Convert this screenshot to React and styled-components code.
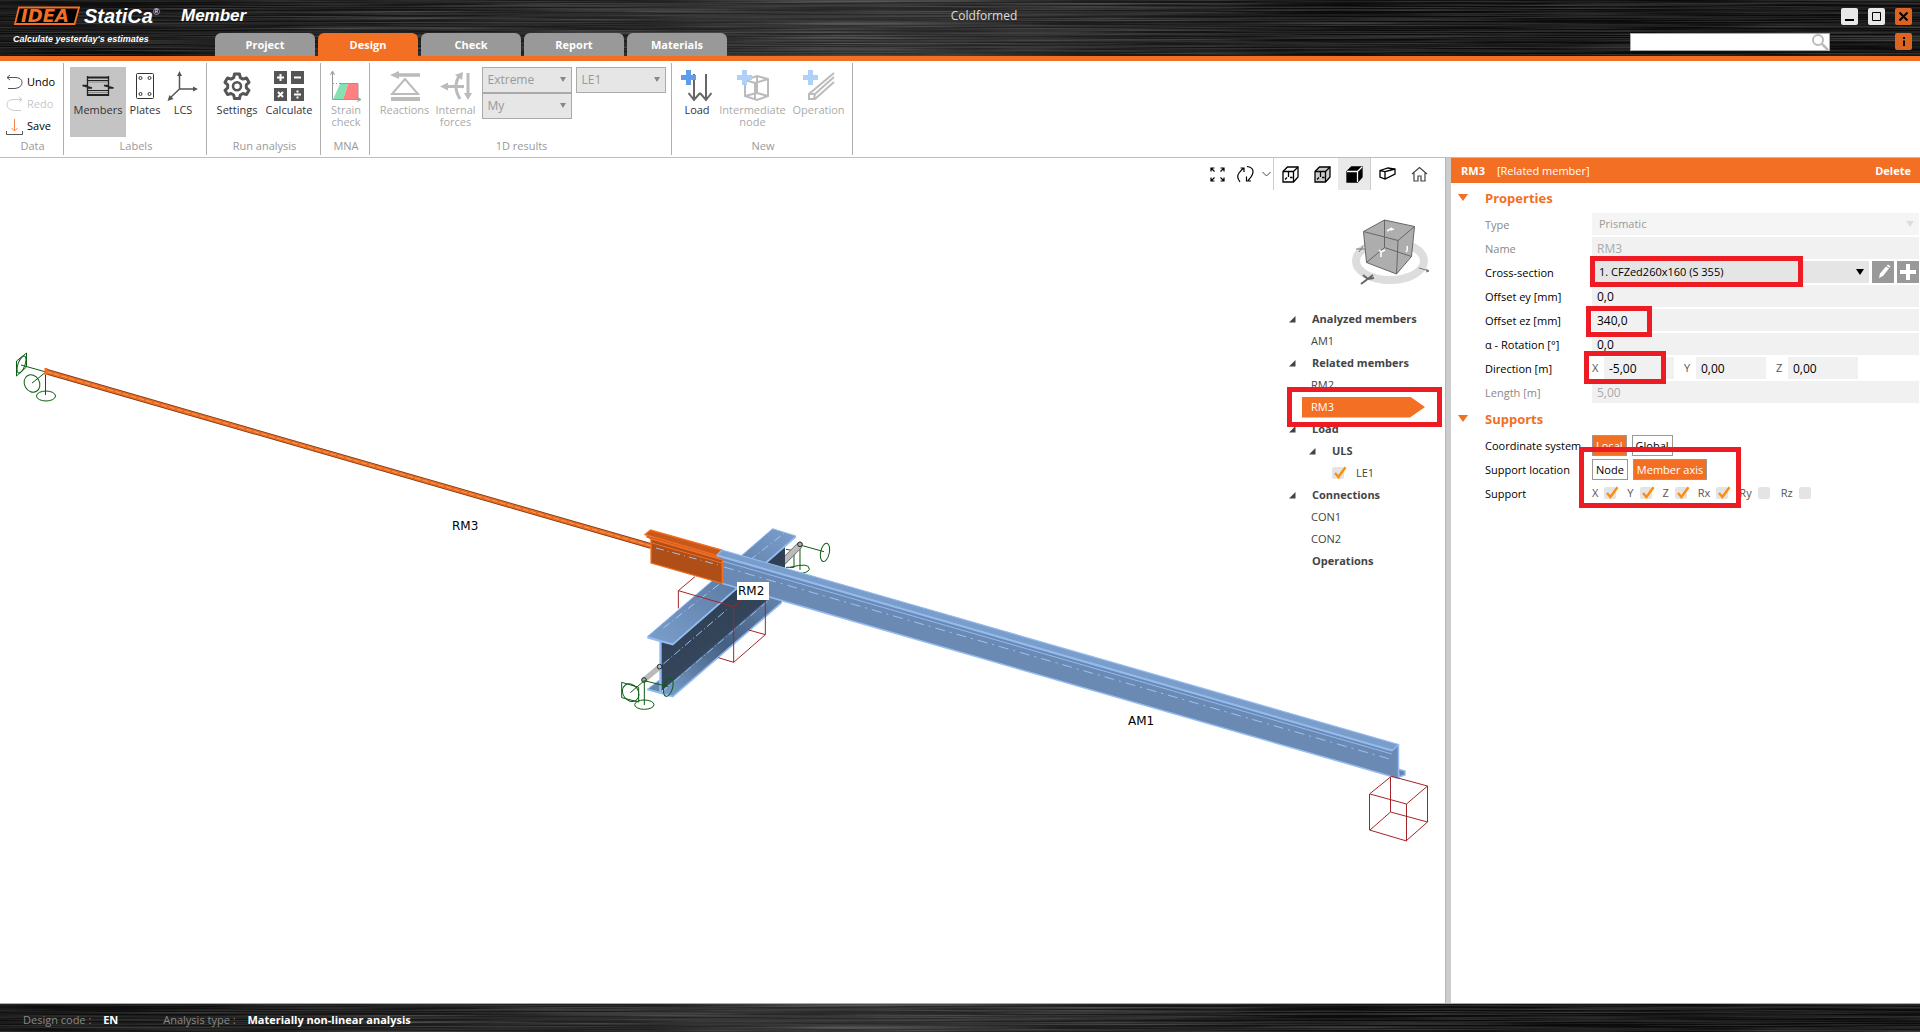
import React, { useState } from 'react';
import styled, { createGlobalStyle, css } from 'styled-components';

const ORANGE = '#f36f24';

const GlobalStyle = createGlobalStyle`
  * { box-sizing: border-box; }
  body {
    margin: 0;
    background: #fff;
    color: #000;
    font: 11px/16px "Open Sans", "Noto Sans", sans-serif;
  }
  button, input, select { font: inherit; color: inherit; }
  button { padding: 0; border: 0; background: none; cursor: pointer; }
`;

const Page = styled.div`
  display: flex;
  flex-direction: column;
  min-height: 100vh;
`;

// ---------- header ----------

const Header = styled.header`
  position: relative;
  display: flex;
  height: 61px;
  background: #0b0b0b;
  border-bottom: 5px solid ${ORANGE};
`;

const TextureSvg = styled.svg`
  position: absolute;
  inset: 0;
  width: 100%;
  height: 100%;
`;

const Brand = styled.div`
  position: relative;
  width: 215px;
  padding: 4px 0 0 13px;
`;

const BrandRow = styled.div`
  display: flex;
  align-items: center;
  height: 24px;
  color: #fff;
  font: italic bold 17px/24px "Liberation Sans", sans-serif;
  svg { flex: none; }
`;

const BrandName = styled.span`
  flex: none;
  width: 100px;
  padding-left: 3px;
  font-size: 20px;
  sup { font-size: 9px; line-height: 0; font-weight: normal; vertical-align: 8px; }
`;

const Slogan = styled.div`
  color: #fff;
  font: italic bold 9px/22px "Liberation Sans", sans-serif;
`;

const Tabs = styled.nav`
  position: relative;
  display: flex;
  align-items: flex-end;
  gap: 3px;
`;

const Tab = styled.button`
  width: 100px;
  height: 23px;
  border-radius: 6px 6px 0 0;
  color: #fff;
  font-weight: bold;
  background: ${props => (props.$active ? ORANGE : '#999')};
`;

const DocTitle = styled.div`
  position: absolute;
  top: 8px;
  left: 0;
  right: 0;
  padding-left: 48px;
  text-align: center;
  color: #ddd;
  font-size: 12px;
`;

const HeaderRight = styled.div`
  position: relative;
  display: flex;
  margin-left: auto;
  padding: 8px 8px 0 0;
  gap: 11px;
`;

const Search = styled.label`
  position: relative;
  width: 200px;
  height: 18px;
  margin-top: 25px;
  input {
    display: block;
    width: 100%;
    height: 100%;
    border: 1px solid #aaa;
    background: #fff;
    padding: 0 22px 0 4px;
  }
  svg { position: absolute; right: 1px; top: 0; }
`;

const WindowButtons = styled.div`
  display: grid;
  grid-template-columns: repeat(3, 17px);
  grid-auto-rows: 17px;
  gap: 8px 10px;
`;

const WindowButton = styled.button`
  display: flex;
  border-radius: 2px;
  background: ${props => (props.$accent ? '#dd6420' : '#e8e8e8')};
  ${props => props.$last && css`grid-column: 3;`}
`;

// ---------- ribbon ----------

const Ribbon = styled.div`
  display: flex;
  height: 97px;
  padding-top: 2px;
  border-bottom: 1px solid #bdbdbd;
`;

const Group = styled.section`
  display: flex;
  flex-direction: column;
  width: ${props => props.$width}px;
  height: 92px;
  padding-top: 4px;
  border-right: 1px solid #b0b0b0;
`;

const GroupBody = styled.div`
  display: flex;
  justify-content: ${props => props.$align || 'center'};
  height: 70px;
  padding-left: ${props => props.$pad || 0}px;
`;

const GroupTitle = styled.div`
  padding-left: 2px;
  color: #999;
  text-align: center;
  line-height: 18px;
`;

const Tool = styled.button`
  display: flex;
  flex-direction: column;
  align-items: center;
  width: ${props => props.$width}px;
  height: 70px;
  padding-top: 3px;
  line-height: 12px;
  color: ${props => (props.disabled ? '#aaa' : '#333')};
  background: ${props => (props.$active ? '#c4c4c4' : 'none')};
  svg { display: block; width: 32px; height: 32px; margin-bottom: 2px; flex: none; }
  span { white-space: nowrap; }
`;

const DataList = styled.div`
  display: flex;
  flex-direction: column;
  width: 63px;
  padding: 4px 0 0 6px;
`;

const DataButton = styled.button`
  display: flex;
  align-items: center;
  gap: 4px;
  height: 22px;
  color: ${props => (props.disabled ? '#c8c8c8' : '#000')};
`;

const Combos = styled.div`
  display: grid;
  grid-template-columns: 90px 90px;
  grid-auto-rows: 26px;
  gap: 0 4px;
  margin-left: 4px;
`;

const ComboWrap = styled.div`
  position: relative;
  height: 26px;
  border: 1px solid #aaa;
  background: #e6e6e6;
  color: #999;
  select {
    display: block;
    width: 100%;
    height: 100%;
    padding: 0 20px 0 5px;
    border: 0;
    background: none;
    appearance: none;
    opacity: 1;
    font-size: 12px;
  }
  &::after {
    content: '';
    position: absolute;
    right: 5px;
    top: 9px;
    border: 3px solid transparent;
    border-top: 5px solid #888;
    pointer-events: none;
  }
`;

// ---------- workspace ----------

const Main = styled.main`
  display: flex;
  flex: 1;
`;

const Viewport = styled.section`
  position: relative;
  flex: 1;
  min-width: 0;
`;

const Scene = styled.svg`
  position: absolute;
  inset: 0;
  width: 100%;
  height: 100%;
`;

const ViewTools = styled.div`
  position: relative;
  display: flex;
  justify-content: flex-end;
  padding-right: 10px;
`;

const ViewTool = styled.button`
  display: flex;
  align-items: center;
  justify-content: center;
  width: ${props => props.$width || 32}px;
  height: 32px;
  border-right: ${props => (props.$divider ? '1px solid #ccc' : '0')};
  background: ${props => (props.$active ? '#e9e9e9' : 'none')};
`;

const SidePane = styled.div`
  position: relative;
  width: 158px;
  margin-left: auto;
`;

const NavCube = styled.svg`
  display: block;
  margin: 20px 0 23px 60px;
`;

const Tree = styled.ul`
  margin: 0;
  padding: 0;
  list-style: none;
`;

const TreeItem = styled.li`
  position: relative;
  display: flex;
  align-items: center;
  height: 22px;
  color: #444;
  padding-left: ${props => (props.$level ? 20 : 0)}px;
`;

const Arrow = styled.span`
  width: 25px;
  padding-left: 2px;
  svg { display: block; }
`;

const TreeButton = styled.button`
  height: 21px;
  text-align: left;
  font-weight: ${props => (props.$bold ? 'bold' : 'normal')};
  ${props => !props.$bold && css`margin-left: 15px; padding-left: 9px;`}
  ${props => props.$active && css`
    width: 123px;
    color: #fff;
    background: ${ORANGE};
    clip-path: polygon(0 0, 108px 0, 100% 50%, 108px 100%, 0 100%);
  `}
`;

const TreeCheck = styled.label`
  display: flex;
  align-items: center;
  gap: 12px;
  padding-left: 25px;
`;

const Highlight = styled.span`
  position: absolute;
  z-index: 1;
  top: ${props => props.$top}px;
  left: ${props => props.$left}px;
  width: ${props => props.$width}px;
  height: ${props => props.$height}px;
  border: 5px solid #ed1c24;
  pointer-events: none;
`;

// ---------- property panel ----------

const Splitter = styled.div`
  width: 6px;
  background: #ccc;
  border-left: 1px solid #b4b4b4;
`;

const Panel = styled.aside`
  width: 469px;
`;

const PanelHeader = styled.div`
  display: flex;
  align-items: center;
  gap: 12px;
  height: 25px;
  padding: 0 9px 0 10px;
  color: #fff;
  background: ${ORANGE};
  button { margin-left: auto; font-weight: bold; }
`;

const SectionTitle = styled.h2`
  display: flex;
  align-items: center;
  gap: 17px;
  height: 30px;
  margin: 0;
  padding-left: 7px;
  color: ${ORANGE};
  font-size: 13px;
`;

const Rows = styled.div`
  display: flex;
  flex-direction: column;
  gap: 2px;
  padding: 0 1px 1px 34px;
`;

const Row = styled.div`
  position: relative;
  display: grid;
  grid-template-columns: 107px 1fr;
  align-items: center;
  height: 22px;
  color: ${props => (props.$muted ? '#888' : '#000')};
  white-space: nowrap;
`;

const rowLabel = css`
  padding-top: 2px;
`;

const RowLabel = styled.label`${rowLabel}`;

const RowCaption = styled.span`${rowLabel}`;

const Field = styled.input`
  width: 100%;
  min-width: 0;
  height: 22px;
  padding: 0 5px;
  border: 0;
  background: #f1f1f1;
  font-size: 12px;
  &:disabled { color: #aaa; }
`;

const SelectField = styled.div`
  position: relative;
  flex: 1;
  height: 22px;
  background: ${props => (props.$muted ? '#f5f5f5' : '#e5e5e5')};
  select {
    width: 100%;
    height: 22px;
    padding: 0 20px 0 7px;
    border: 0;
    background: none;
    appearance: none;
    opacity: 1;
    color: ${props => (props.$muted ? '#999' : '#000')};
  }
  &::after {
    content: '';
    position: absolute;
    right: 5px;
    top: 8px;
    border: 4px solid transparent;
    border-top: 6px solid ${props => (props.$muted ? '#ddd' : '#000')};
    pointer-events: none;
  }
`;

const Inline = styled.div`
  display: flex;
  align-items: center;
  gap: ${props => props.$gap}px;
`;

const SquareButton = styled.button`
  width: 22px;
  height: 22px;
  background: #999;
  svg { display: block; }
`;

const Axis = styled.label`
  display: grid;
  grid-template-columns: 12px 70px;
  align-items: center;
  color: #555;
  input { color: #000; }
`;

const Toggle = styled.button`
  height: 21px;
  padding: 0 3px;
  border: 1px solid #999;
  line-height: 19px;
  color: ${props => (props.$active ? '#fff' : '#000')};
  background: ${props => (props.$active ? ORANGE : '#fff')};
`;

const CheckLabel = styled.label`
  display: flex;
  align-items: center;
  gap: 6px;
  color: #555;
`;

const CheckBox = styled.span`
  position: relative;
  width: 12px;
  height: 12px;
  input {
    display: block;
    width: 12px;
    height: 12px;
    margin: 0;
    appearance: none;
    border-radius: 2px;
    background: #e4e4e4;
  }
  svg { position: absolute; left: 1px; bottom: 0; pointer-events: none; }
`;

// ---------- footer ----------

const Footer = styled.footer`
  position: relative;
  display: flex;
  height: 29px;
  padding: 3px 23px 0;
  gap: 45px;
  align-items: center;
  border-top: 1px solid #aaa;
  background: #0b0b0b;
  color: #888;
  div { position: relative; }
  b { margin-left: 9px; color: #fff; }
`;

const Brushed = ({ id }) => (
  <TextureSvg aria-hidden="true" preserveAspectRatio="none">
    <filter id={id} x="0" y="0" width="100%" height="100%">
      <feTurbulence type="fractalNoise" baseFrequency="0.004 0.8" numOctaves="3" seed="4" />
      <feColorMatrix values="0 0 0 0 1  0 0 0 0 1  0 0 0 0 1  0.45 0 0 0 -0.16" />
    </filter>
    <linearGradient id={`${id}g`}>
      <stop offset="0" stopColor="#fff" stopOpacity="0" />
      <stop offset=".2" stopColor="#fff" stopOpacity=".04" />
      <stop offset=".46" stopColor="#fff" stopOpacity=".13" />
      <stop offset=".7" stopColor="#fff" stopOpacity="0" />
    </linearGradient>
    <rect width="100%" height="100%" fill={`url(#${id}g)`} />
    <rect width="100%" height="100%" filter={`url(#${id})`} />
  </TextureSvg>
);

const Tick = () => (
  <svg width="14" height="13" viewBox="0 0 14 13">
    <path d="M2 7l3.400 4L12.500 1.200" fill="none" stroke="#ff8c0a" strokeWidth="2.400" />
  </svg>
);

const Check = ({ label, checked }) => {
  const [on, setOn] = useState(Boolean(checked));
  return (
    <CheckBox>
      <input type="checkbox" aria-label={label} checked={on} onChange={e => setOn(e.target.checked)} />
      {on && <Tick />}
    </CheckBox>
  );
};

// ribbon drawings, all on a 32 x 32 grid
const toolIcons = {
  members: (
    <g fill="none" stroke="#222">
      <path d="M5 7.500h22M5 25h22" strokeWidth="2" />
      <path d="M5 10.500h22M5 20.500h22" />
      <path d="M5 12h22M5 22.500h22" stroke="#888" />
      <path d="M5.500 6v9.500H.5l9.500 2.500H5.500v8M26.500 6v9.500H22l9.500 2.500h-5v8" strokeWidth="1.300" />
    </g>
  ),
  plates: (
    <g fill="none" stroke="#333">
      <rect x="7.500" y="3.500" width="17" height="25" rx="1" />
      <circle cx="11.500" cy="8" r="1.500" /><circle cx="20.500" cy="8" r="1.500" />
      <circle cx="11.500" cy="24" r="1.500" /><circle cx="20.500" cy="24" r="1.500" />
    </g>
  ),
  lcs: (
    <g fill="#555" stroke="#555">
      <path d="M12.500 4v15H28M12.500 19L3 28" fill="none" strokeWidth="1.500" />
      <path d="M12.500 1l2.500 5h-5zM31 19l-5-2.500v5zM0.500 31l2-6 4 4z" stroke="none" />
    </g>
  ),
  settings: (
    <g fill="none" stroke="#555" strokeWidth="3">
      <path strokeLinejoin="round" d="M13.500 4h5l.8 3.600 2.700 1.500 3.500-1.100 2.500 4.300-2.700 2.500v3l2.700 2.500-2.500 4.300-3.500-1.100-2.700 1.500-.8 3.600h-5l-.8-3.600L10 23.500l-3.500 1.100L4 20.300l2.700-2.500v-3L4 12.300 6.500 8 10 9.100l2.700-1.500z" />
      <circle cx="16" cy="16.300" r="4" strokeWidth="2.600" />
    </g>
  ),
  calculate: (
    <g>
      <path d="M1 1h13v13H1zM18 1h13v13H18zM1 18h13v13H1zM18 18h13v13H18z" fill="#555" />
      <path d="M4 7.500h7M7.500 4v7M21 7.500h7M5 22l5 5M10 22l-5 5M21 24.500h7" stroke="#fff" strokeWidth="2" />
      <path d="M23.500 20.500h2v2h-2zM23.500 26.500h2v2h-2z" fill="#fff" />
    </g>
  ),
  strain: (
    <g fill="none" stroke="#999">
      <path d="M18 14h10v15.500H13z" fill="#ff8080" stroke="none" />
      <path d="M10 14h8l-5 15.500H3z" fill="#85e0b2" stroke="none" />
      <path d="M2.500 29.500V2M.5 5l2-4 2 4M2.500 29.500H30M27 27.500l4 2-4 2" />
      <path d="M3 13.500h7" strokeDasharray="1 2" /><path d="M10 13.500h18v16" />
    </g>
  ),
  reactions: (
    <g fill="none" stroke="#bbb">
      <path d="M9 5h22" strokeWidth="3.500" /><path d="M1 5l9-4v8z" fill="#bbb" stroke="none" />
      <path d="M16 9L3 24h26z" strokeWidth="2" /><path d="M2 29h29" strokeWidth="4" />
    </g>
  ),
  internal: (
    <g fill="none" stroke="#bbb" strokeWidth="3">
      <path d="M5 16.500h19M28 3v22M20 5q-8 11 0 24" />
      <path d="M0 16.500l8-4v8zM15 5l8-3-1 8zM24 23h8l-4 7z" fill="#bbb" stroke="none" />
    </g>
  ),
  load: (
    <g fill="none" stroke="#666" strokeWidth="2">
      <path d="M13 4v26M25 4v26M7.500 23l5.500 7 6-7M19 23l6 7 5.500-7" />
      <path d="M5 0h5v5h5v5h-5v5H5v-5H0V5h5z" fill="#5f9dea" stroke="none" />
    </g>
  ),
  node: (
    <g fill="none" stroke="#bbb" strokeWidth="2">
      <path d="M8 10l12-4 11 3v17l-11 4-12-4zM8 10l10 3 13-4M18 13v17M20 6v17L8 26M20 23l11 3" />
      <path d="M5 0h5v5h5v5h-5v5H5v-5H0V5h5z" fill="#b0d0f7" stroke="none" />
    </g>
  ),
  operation: (
    <g fill="none" stroke="#bbb" strokeWidth="2">
      <path d="M31 3L6 24v5h6L31 12M12 24L31 7M6 24h6l-1 5" />
      <path d="M5 0h5v5h5v5h-5v5H5v-5H0V5h5z" fill="#b0d0f7" stroke="none" />
    </g>
  ),
};

const RibbonTool = ({ icon, lines, ...props }) => (
  <Tool {...props}>
    <svg viewBox="0 0 32 32">{toolIcons[icon]}</svg>
    {lines.map(line => <span key={line}>{line}</span>)}
  </Tool>
);

const Combo = ({ label, value }) => (
  <ComboWrap>
    <select aria-label={label} disabled defaultValue={value}>
      <option>{value}</option>
    </select>
  </ComboWrap>
);

const CubeIcon = ({ fill, solid }) => (
  <svg width="17" height="17" viewBox="0 0 17 17" fill={fill || 'none'} stroke="#000" strokeWidth="1.300">
    <path d="M1 5.500L5.500 1H16v10l-4.500 5H1z" />
    {solid
      ? <path d="M1 5.500h10.500V16M11.500 5.500L16 1" stroke="#fff" />
      : <path d="M1 5.500h10.500V16M11.500 5.500L16 1M6.500 5v6M8 11.500h2.500M5 11.500L3 13.500" />}
  </svg>
);

const steel = '#93bbf2';

const SupportSymbol = () => (
  <g fill="none" stroke="#0b5d12" strokeWidth="1">
    <path d="M45.500 372v23M46 372L32 383M46 372l-25-7" />
    <path d="M16.500 361l10-8v14l-10 9z" />
    <ellipse cx="21.500" cy="364.500" rx="3.500" ry="9" transform="rotate(20 21.500 364.500)" />
    <ellipse cx="32" cy="383.500" rx="7.500" ry="9" transform="rotate(-30 32 383.500)" />
    <ellipse cx="46" cy="396" rx="9.500" ry="5" />
  </g>
);

const ModelScene = () => (
  <Scene viewBox="0 158 1445 845" fontFamily="DejaVu Sans, sans-serif" fontSize="12">
    <defs>
      <linearGradient id="web" x1="0" y1="0" x2=".6" y2="1">
        <stop offset="0" stopColor="#253244" /><stop offset="1" stopColor="#3c4f66" />
      </linearGradient>
      <linearGradient id="flange" x1="0" y1="1" x2="1" y2="0">
        <stop offset="0" stopColor="#7b9fcd" /><stop offset=".55" stopColor="#5d7da5" /><stop offset="1" stopColor="#7b9fcd" />
      </linearGradient>
      <linearGradient id="lowerFlange" x1="0" y1="1" x2="1" y2="0">
        <stop offset="0" stopColor="#7b9fcd" /><stop offset=".5" stopColor="#455f80" /><stop offset="1" stopColor="#6888b2" />
      </linearGradient>
    </defs>

    <SupportSymbol />

    {/* cross beam RM2 */}
    <g transform="translate(600 500) scale(.33333)" strokeWidth="3">
      <g fill="none" stroke="#0b5d12">
        <path d="M600 135v75M600 135l72 20M558 148l24 4v50h-24M570 202q60-16 58 6q-6 12-30 12" />
        <ellipse cx="675" cy="157" rx="13" ry="28" transform="rotate(12 675 157)" />
      </g>
      <path d="M545 190l55-55" stroke="#777" strokeWidth="20" />
      <path d="M545 190l55-55" stroke="#bbb" strokeWidth="15" />
      <circle cx="600" cy="133" r="7" fill="#aaa" stroke="#222" />
      <path d="M142 568l36-28 8 38z" fill="#6686ae" stroke={steel} />
      <path d="M184 578l34 12L545 308l-5-50-110 60z" fill="url(#lowerFlange)" />
      <path d="M184 424l34 10L555 140v70L512 290 184 574z" fill="url(#web)" />
      <path d="M142 568l76 22L545 308" fill="none" stroke={steel} strokeWidth="5" />
      <path d="M190 572L512 296M190 492L384 326" fill="none" stroke={steel} strokeDasharray="24 8 3 8" />
      <path d="M142 410L518 86l70 22L218 432z" fill="url(#flange)" stroke={steel} />
      <path d="M142 413l76 21L588 110" fill="none" stroke={steel} strokeWidth="5" />
      <path d="M190 384L552 100" fill="none" stroke="#a5c7f5" strokeDasharray="24 10 3 10" />
      <path d="M181 424v152" stroke={steel} strokeWidth="6" />
      <path d="M132 540l48-40" stroke="#b9b9b9" strokeWidth="16" />
      <circle cx="132" cy="540" r="7" fill="#aaa" stroke="#222" />
      <circle cx="179" cy="500" r="7" fill="none" stroke="#222" />
      <g fill="none" stroke="#0b5d12">
        <path d="M133 545v70M133 542l72 18M133 542l-42 36M65 547l51 15v44l-51-13z" />
        <ellipse cx="92" cy="578" rx="23" ry="28" transform="rotate(-35 92 578)" />
        <ellipse cx="133" cy="614" rx="29" ry="14" />
        <ellipse cx="205" cy="562" rx="13" ry="28" transform="rotate(15 205 562)" />
      </g>
      <path d="M235 325v-53l50-42M235 272l166 48v167l95-83V290M401 320l95-78M401 487l-46-14M496 404l-50-14" fill="none" stroke="#a52426" />
    </g>

    {/* RM3 */}
    <path d="M46 371.500L651 546" stroke="#74350f" strokeWidth="5.500" />
    <path d="M46 371.500L651 546" stroke="#e8691f" strokeWidth="4" />
    <path d="M46 371.500L651 546" stroke="#ff9957" strokeWidth="1" strokeDasharray="6 2" />
    <path d="M46 368v7" stroke={ORANGE} strokeWidth="3" />
    <path d="M645 535l6 5v3l72 20v-8l-6-1z" fill="#c9591a" />
    <path d="M651 539l71.500 21v23.500L651 563z" fill="#b04e18" stroke={ORANGE} strokeWidth="1.300" />
    <path d="M645 534.500l5.500-4.500 71.500 20-5 5.500z" fill="#c9591a" stroke={ORANGE} strokeWidth="1.300" />
    <path d="M646 537l74 21M652 543l70 20" stroke={ORANGE} />
    <path d="M656 548l66 18" stroke="#9cc2f5" strokeDasharray="8 4 1 4" />

    {/* AM1 */}
    <path d="M1398 769l7 2v4l-6 2z" fill="#6686ae" stroke={steel} strokeWidth="1.500" />
    <path d="M717 555l675 196 6-7v34L722.500 583.500V560z" fill="#6a8ab3" />
    <path d="M722 550l676.500 194.500-6 6L717 555z" fill="#7b9dc9" stroke={steel} strokeWidth="1.200" />
    <path d="M722.500 583.500L1398.500 778.500v-34" fill="none" stroke={steel} strokeWidth="1.500" />
    <path d="M717 555.500L1392 750.500" stroke={steel} strokeWidth="2" />
    <path d="M722 561L1392 754" stroke={steel} strokeWidth="1" />
    <path d="M724 567l669 193" stroke="#9cc2f5" strokeDasharray="10 5 2 5" />
    <path d="M722.500 560v23.500" stroke={ORANGE} strokeWidth="1.500" />

    <path d="M1370 794l36.500 10 21-18-37-10M1390.500 777l-21 17v36l37 11v-37M1406 841l21.500-19v-36M1370 830l20.500-18 37 10M1390.500 777v35" fill="none" stroke="#a52426" />

    <rect x="737" y="582" width="32" height="18" fill="#fff" />
    <text x="738" y="595">RM2</text>
    <text x="452" y="530">RM3</text>
    <text x="1128" y="725">AM1</text>
  </Scene>
);

const Navigator = () => (
  <NavCube width="90" height="75" viewBox="1347 210 90 75">
    <ellipse cx="1390" cy="261" rx="34" ry="19" fill="none" stroke="#ddd" strokeWidth="8" />
    <path d="M1363.500 231.500l21-11.500 30 6.500-3 30-15 17.500-30-11.500z" fill="#aaa" fillOpacity=".95" />
    <path
      d="M1363.500 231.500l21-11.500 30 6.500-16.500 14zM1398 240.500l-1.500 33.500-30-11.500-3-31M1414.500 226.500l-3 30-15 17.500M1384.500 220v27.500l27 9M1384.500 247.500l-18 15"
      fill="none"
      stroke="#666"
    />
    <path d="M1387 231l5-3M1390 230l4-1M1406 252q2-2 1-6M1381 252l-2-2M1381 252v5M1381 252l4-2" stroke="#fff" strokeWidth="1.500" fill="none" />
    <path d="M1361 284l12-9M1363 275l5 4 6-1" stroke="#666" strokeWidth="2" fill="none" />
    <path d="M1356 249h9M1359 252l4-6M1419 268l10 3-3-2M1429 271l-3 1" stroke="#777" fill="none" />
  </NavCube>
);

const tree = [
  { name: 'Analyzed members', arrow: true },
  { name: 'AM1', leaf: true },
  { name: 'Related members', arrow: true },
  { name: 'RM2', leaf: true },
  { name: 'RM3', leaf: true, active: true },
  { name: 'Load', arrow: true },
  { name: 'ULS', arrow: true, level: 1 },
  { name: 'LE1', check: true, level: 1 },
  { name: 'Connections', arrow: true },
  { name: 'CON1', leaf: true },
  { name: 'CON2', leaf: true },
  { name: 'Operations' },
];

const TreeRow = ({ item }) => {
  if (item.check) {
    return (
      <TreeItem $level={item.level}>
        <TreeCheck><Check label={item.name} checked />{item.name}</TreeCheck>
      </TreeItem>
    );
  }
  return (
    <TreeItem $level={item.level}>
      {!item.leaf && (
        <Arrow>
          {item.arrow && <svg width="7" height="7"><path d="M6.500 0v6.500H0z" fill="#444" /></svg>}
        </Arrow>
      )}
      <TreeButton $bold={!item.leaf} $active={item.active}>{item.name}</TreeButton>
      {item.active && <Highlight $top={-9} $left={0} $width={155} $height={40} />}
    </TreeItem>
  );
};

const Section = ({ title, children }) => (
  <section>
    <SectionTitle>
      <svg width="10" height="8"><path d="M0 0h10L5 7z" fill={ORANGE} /></svg>
      {title}
    </SectionTitle>
    <Rows>{children}</Rows>
  </section>
);

const InputRow = ({ id, label, value, muted, children }) => (
  <Row $muted={muted}>
    <RowLabel htmlFor={id}>{label}</RowLabel>
    <Field id={id} defaultValue={value} disabled={muted} />
    {children}
  </Row>
);

const App = () => (
  <Page>
    <GlobalStyle />
    <Header>
      <Brushed id="brushTop" />
      <DocTitle>Coldformed</DocTitle>
      <Brand>
        <BrandRow>
          <svg width="68" height="20" viewBox="0 0 68 20">
            <path d="M6 1.500h60L61.500 18H2z" fill="#000" stroke={ORANGE} strokeWidth="1.800" />
            <text x="8" y="16" fill={ORANGE} fontFamily="DejaVu Sans, sans-serif" fontSize="18" fontWeight="bold" fontStyle="italic">IDEA</text>
          </svg>
          <BrandName>StatiCa<sup>®</sup></BrandName>
          <span>Member</span>
        </BrandRow>
        <Slogan>Calculate yesterday's estimates</Slogan>
      </Brand>
      <Tabs>
        {['Project', 'Design', 'Check', 'Report', 'Materials'].map(name => (
          <Tab key={name} $active={name === 'Design'}>{name}</Tab>
        ))}
      </Tabs>
      <HeaderRight>
        <Search>
          <input type="text" aria-label="Search" />
          <svg width="18" height="18" fill="none" stroke="#bbb" strokeWidth="2">
            <circle cx="7" cy="7" r="5" /><path d="M11 11l6 6" strokeWidth="2.500" />
          </svg>
        </Search>
        <WindowButtons>
          <WindowButton aria-label="Minimize">
            <svg width="17" height="17"><path d="M4 12h9" stroke="#000" strokeWidth="2" /></svg>
          </WindowButton>
          <WindowButton aria-label="Maximize">
            <svg width="17" height="17"><path d="M4.500 4.500h8v8h-8z" fill="none" stroke="#000" /></svg>
          </WindowButton>
          <WindowButton aria-label="Close" $accent>
            <svg width="17" height="17"><path d="M4.500 4.500l8 8M12.500 4.500l-8 8" stroke="#000" strokeWidth="2" /></svg>
          </WindowButton>
          <WindowButton aria-label="Info" $accent $last>
            <svg width="17" height="17"><path d="M9 4v2M9 7.500V13" stroke="#000" strokeWidth="2" /></svg>
          </WindowButton>
        </WindowButtons>
      </HeaderRight>
    </Header>

    <Ribbon>
      <Group $width={64}>
        <GroupBody>
          <DataList>
            <DataButton>
              <svg width="17" height="16" fill="none" stroke="#555"><path d="M4 1L1 3.500 4 6M1 3.500h8q7 0 7 5t-7 6H2" /></svg>
              Undo
            </DataButton>
            <DataButton disabled>
              <svg width="17" height="16" fill="none" stroke="#ccc"><path d="M13 1l3 2.500L13 6M16 3.500H8q-7 0-7 5t7 6h7" /></svg>
              Redo
            </DataButton>
            <DataButton>
              <svg width="17" height="17" fill="none"><path d="M.5 13v3.500h16V13" stroke="#555" /><path d="M8.500 1v12M5.500 10l3 3 3-3" stroke="#f5874a" /></svg>
              Save
            </DataButton>
          </DataList>
        </GroupBody>
        <GroupTitle>Data</GroupTitle>
      </Group>
      <Group $width={143}>
        <GroupBody $align="flex-start" $pad={6}>
          <RibbonTool icon="members" lines={['Members']} $width={56} $active />
          <RibbonTool icon="plates" lines={['Plates']} $width={38} />
          <RibbonTool icon="lcs" lines={['LCS']} $width={38} />
        </GroupBody>
        <GroupTitle>Labels</GroupTitle>
      </Group>
      <Group $width={114}>
        <GroupBody>
          <RibbonTool icon="settings" lines={['Settings']} $width={51} />
          <RibbonTool icon="calculate" lines={['Calculate']} $width={53} />
        </GroupBody>
        <GroupTitle>Run analysis</GroupTitle>
      </Group>
      <Group $width={49}>
        <GroupBody $pad={2}>
          <RibbonTool icon="strain" lines={['Strain', 'check']} $width={44} disabled />
        </GroupBody>
        <GroupTitle>MNA</GroupTitle>
      </Group>
      <Group $width={302}>
        <GroupBody>
          <RibbonTool icon="reactions" lines={['Reactions']} $width={58} disabled />
          <RibbonTool icon="internal" lines={['Internal', 'forces']} $width={44} disabled />
          <Combos>
            <Combo label="Extreme" value="Extreme" />
            <Combo label="Load effect" value="LE1" />
            <Combo label="Force" value="My" />
          </Combos>
        </GroupBody>
        <GroupTitle>1D results</GroupTitle>
      </Group>
      <Group $width={181}>
        <GroupBody $pad={2}>
          <RibbonTool icon="load" lines={['Load']} $width={38} />
          <RibbonTool icon="node" lines={['Intermediate', 'node']} $width={73} disabled />
          <RibbonTool icon="operation" lines={['Operation']} $width={59} disabled />
        </GroupBody>
        <GroupTitle>New</GroupTitle>
      </Group>
    </Ribbon>

    <Main>
      <Viewport>
        <ModelScene />
        <ViewTools>
          <ViewTool $width={28} aria-label="Zoom to fit">
            <svg width="15" height="15" fill="none" stroke="#000" strokeWidth="1.200"><path d="M1 4.500V1h3.500M1 1l3.500 3.500M10.500 1H14v3.500M14 1l-3.500 3.500M1 10.500V14h3.500M1 14l3.500-3.500M14 10.500V14h-3.500M14 14l-3.500-3.500" /></svg>
          </ViewTool>
          <ViewTool $width={28} aria-label="Rotate">
            <svg width="17" height="17" fill="none" stroke="#000" strokeWidth="1.200"><path d="M3 16Q-1 11 2 7t5-5M3.500 2H7v4M10 .500q6 1 6 5t-5 9M9.500 10.500v4.500H14" /></svg>
          </ViewTool>
          <ViewTool $width={15} $divider aria-label="Rotation options">
            <svg width="9" height="6" fill="none" stroke="#444"><path d="M.5 1l4 4 4-4" /></svg>
          </ViewTool>
          <ViewTool aria-label="Wireframe"><CubeIcon /></ViewTool>
          <ViewTool aria-label="Transparent"><CubeIcon fill="#ccc" /></ViewTool>
          <ViewTool $width={33} aria-label="Solid" $active $divider><CubeIcon fill="#000" solid /></ViewTool>
          <ViewTool aria-label="Perspective">
            <svg width="17" height="14" fill="none" stroke="#000" strokeWidth="1.300"><path d="M1 3.500l8-2.500 7 1v5L6 12 1 10zM1 3.500l5 1.200V12M6 4.700L16 2" /></svg>
          </ViewTool>
          <ViewTool aria-label="Home view">
            <svg width="17" height="17" fill="none" stroke="#444" strokeWidth="1.200"><path d="M1 8l7.500-6.500L16 8M3 7v8h4v-5h3v5h4V7" /></svg>
          </ViewTool>
        </ViewTools>
        <SidePane>
          <Navigator />
          <Tree>
            {tree.map(item => <TreeRow key={item.name} item={item} />)}
          </Tree>
        </SidePane>
      </Viewport>
      <Splitter />
      <Panel>
        <PanelHeader>
          <b>RM3</b>
          <span>[Related member]</span>
          <button>Delete</button>
        </PanelHeader>
        <Section title="Properties">
          <Row $muted>
            <RowLabel htmlFor="type">Type</RowLabel>
            <SelectField $muted>
              <select id="type" disabled><option>Prismatic</option></select>
            </SelectField>
          </Row>
          <InputRow id="name" label="Name" value="RM3" muted />
          <Row>
            <RowLabel htmlFor="section">Cross-section</RowLabel>
            <Inline $gap={3}>
              <SelectField>
                <select id="section"><option>1. CFZed260x160 (S 355)</option></select>
              </SelectField>
              <SquareButton aria-label="Edit">
                <svg width="22" height="22" fill="#fff"><path d="M7 17l1-4.500 6-7 3 2-6 7.500zM14.700 4.700L16 3.500l2.500 2-1 1.200z" /></svg>
              </SquareButton>
              <SquareButton aria-label="Add">
                <svg width="22" height="22"><path d="M11 3v16M3 11h16" stroke="#fff" strokeWidth="4" /></svg>
              </SquareButton>
            </Inline>
            <Highlight $top={-5} $left={105} $width={213} $height={31} />
          </Row>
          <InputRow id="ey" label="Offset ey [mm]" value="0,0" />
          <InputRow id="ez" label="Offset ez [mm]" value="340,0">
            <Highlight $top={-3} $left={101} $width={66} $height={31} />
          </InputRow>
          <InputRow id="rotation" label="α - Rotation [°]" value="0,0" />
          <Row>
            <RowCaption>Direction [m]</RowCaption>
            <Inline $gap={10}>
              <Axis>X<Field defaultValue="-5,00" /></Axis>
              <Axis>Y<Field defaultValue="0,00" /></Axis>
              <Axis>Z<Field defaultValue="0,00" /></Axis>
            </Inline>
            <Highlight $top={-6} $left={99} $width={82} $height={33} />
          </Row>
          <InputRow id="length" label="Length [m]" value="5,00" muted />
        </Section>
        <Section title="Supports">
          <Row>
            <RowCaption>Coordinate system</RowCaption>
            <Inline $gap={5}>
              <Toggle $active>Local</Toggle>
              <Toggle>Global</Toggle>
            </Inline>
            <Highlight $top={13} $left={94} $width={162} $height={61} />
          </Row>
          <Row>
            <RowCaption>Support location</RowCaption>
            <Inline $gap={5}>
              <Toggle>Node</Toggle>
              <Toggle $active>Member axis</Toggle>
            </Inline>
          </Row>
          <Row>
            <RowCaption>Support</RowCaption>
            <Inline $gap={11}>
              {['X', 'Y', 'Z', 'Rx', 'Ry', 'Rz'].map(axis => (
                <CheckLabel key={axis}>
                  {axis}
                  <Check label={axis} checked={axis !== 'Ry' && axis !== 'Rz'} />
                </CheckLabel>
              ))}
            </Inline>
          </Row>
        </Section>
      </Panel>
    </Main>

    <Footer>
      <Brushed id="brushBottom" />
      <div>Design code : <b>EN</b></div>
      <div>Analysis type : <b>Materially non-linear analysis</b></div>
    </Footer>
  </Page>
);

export default App;
